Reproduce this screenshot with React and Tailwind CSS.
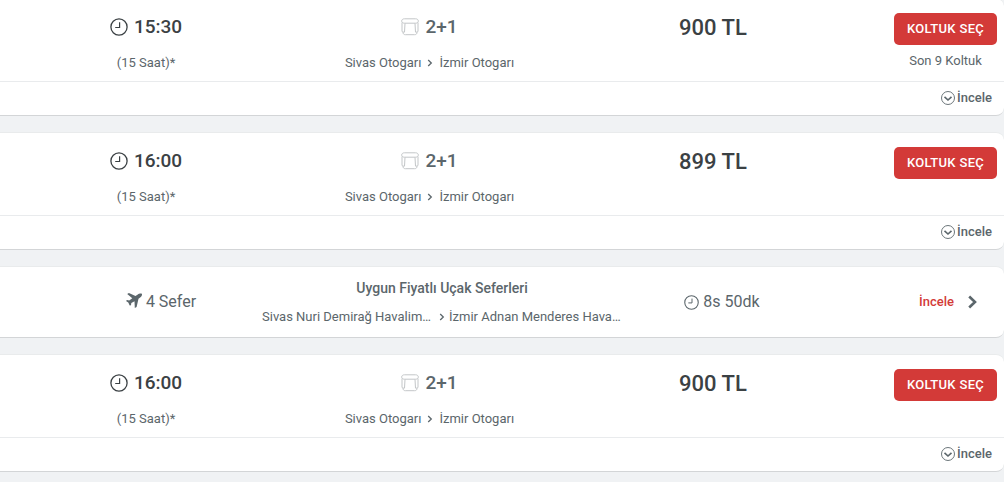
function Clock({ className }) {
  return (
    <svg viewBox="0 0 18 18" fill="none" stroke="currentColor" className={className} aria-hidden="true">
      <circle cx="9" cy="9" r="8.1" strokeWidth="1.3" />
      <path d="M9.6 4.3V9.5H5.2" strokeWidth="1.2" />
    </svg>
  );
}

function Seat() {
  return (
    <svg viewBox="0 0 18 18" fill="none" stroke="currentColor" className="size-[18px] text-[#c3c6c8]" aria-hidden="true">
      <path d="M3.5 0.800H14.500C16.300 0.800 17.300 1.700 17.300 3C17.300 4.300 16.300 5.200 14.500 5.200H3.500C1.700 5.200 0.700 4.300 0.700 3C0.700 1.700 1.700 0.800 3.500 0.800Z" />
      <path d="M1 4.500V13C1 13.700 1.400 14.100 2.100 14.100H3.500L4 5.400M17 4.500V13C17 13.700 16.600 14.100 15.900 14.100H14.500L14 5.400" />
      <path d="M2 14.200C2 15.900 2.900 16.700 4.400 16.700H13.600C15.100 16.700 16 15.900 16 14.200" />
    </svg>
  );
}

function SmallArrow() {
  return (
    <svg viewBox="0 0 6 8" fill="none" stroke="currentColor" strokeWidth="1.3" className="h-2 w-1.5 shrink-0" aria-hidden="true">
      <path d="M1.2 1L4.3 4L1.2 7" />
    </svg>
  );
}

function CircleDown() {
  return (
    <svg viewBox="0 0 14 14" fill="none" stroke="currentColor" className="size-3.5" aria-hidden="true">
      <circle cx="7" cy="7" r="6.5" strokeWidth="0.9" />
      <path d="M3.5 5.8L7 9L10.5 5.8" strokeWidth="1.6" />
    </svg>
  );
}

function Plane() {
  return (
    <svg viewBox="0 0 16 18" fill="currentColor" className="h-[18px] w-4" aria-hidden="true">
      <path d="M15.800 0.800C15 0 12.800 0.700 11.800 1.400L9.500 3L2.900 0.100L1.200 0.900L6.300 5.200L3.200 7.600L1 7L0 7.900L2.300 9.600L3.700 12.600L5 12.200L5.300 10.100L8.500 8.200L8.800 15L10.600 14L12.500 5.800L14.800 4C15.900 3.100 16.300 1.500 15.800 0.800Z" />
    </svg>
  );
}

function Card({ children }) {
  return (
    <article className="rounded-r-lg border-y border-[#e9ebec] border-b-[#d3d5d7] bg-white">
      {children}
    </article>
  );
}

function BusTrip({ time, price, left }) {
  return (
    <Card>
      <div className="grid h-[83px] grid-cols-[292fr_275fr_320fr_117fr] border-b border-[#e9ebed] pt-3.5 text-center">
        <div>
          <div className="flex h-7 items-center justify-center gap-1.5 text-[19px] font-medium text-[#3b4144]">
            <Clock className="size-[18px]" />
            <span>{time}</span>
          </div>
          <p className="mt-3 text-[13px] leading-5">(15 Saat)*</p>
        </div>
        <div>
          <div className="flex h-7 items-center justify-center gap-1.5 text-[19px] font-medium">
            <Seat />
            <span>2+1</span>
          </div>
          <p className="mt-3 flex items-center justify-center gap-1.5 text-[13px] leading-5">
            <span>Sivas Otogarı</span>
            <SmallArrow />
            <span>İzmir Otogarı</span>
          </p>
        </div>
        <div className="pr-7 text-[22px] leading-[30px] font-medium text-[#3b4144]">{price} TL</div>
        <div>
          <button type="button" className="h-8 w-[103px] rounded-[5px] bg-[#d33a38] text-[13px] font-medium tracking-wide text-white">
            KOLTUK SEÇ
          </button>
          {left && <p className="mt-1.5 text-[13px] leading-5">{left}</p>}
        </div>
      </div>
      <div className="flex h-[33px] items-center justify-end pr-3 pb-0.5">
        <button type="button" className="flex items-center gap-0.5 text-[13px] font-medium">
          <CircleDown />
          İncele
        </button>
      </div>
    </Card>
  );
}

function FlightOffer() {
  return (
    <Card>
      <div className="grid h-[70px] grid-cols-[262fr_360fr_200fr_182fr]">
        <div className="flex items-center justify-center gap-1 pl-15 text-base">
          <Plane />
          4 Sefer
        </div>
        <div className="flex min-w-0 flex-col items-center pt-[9px]">
          <h2 className="text-sm leading-6 font-medium">Uygun Fiyatlı Uçak Seferleri</h2>
          <p className="mt-[5px] flex w-full items-center gap-1 text-[13px] leading-6">
            <span className="min-w-0 flex-1 truncate">Sivas Nuri Demirağ Havalimanı</span>
            <SmallArrow />
            <span className="min-w-0 flex-1 truncate">İzmir Adnan Menderes Havalimanı</span>
          </p>
        </div>
        <div className="flex items-center justify-center gap-1 text-base">
          <Clock className="size-[15px]" />
          8s 50dk
        </div>
        <a href="#ucak" className="flex items-center justify-end gap-3.5 pr-[27px] text-[13px] font-medium text-[#d33a38]">
          İncele
          <svg viewBox="0 0 9 14" fill="none" stroke="currentColor" strokeWidth="2.6" className="h-3.5 w-[9px] text-[#5b666b]" aria-hidden="true">
            <path d="M1.200 1.500L7 7L1.200 12.500" />
          </svg>
        </a>
      </div>
    </Card>
  );
}

export default function App() {
  return (
    <div className="min-h-screen overflow-hidden bg-[#f0f2f4] font-['Roboto',sans-serif] text-[#5b666b]">
      <main className="-mt-0.5 flex flex-col gap-4 pb-2.5">
        <BusTrip time="15:30" price="900" left="Son 9 Koltuk" />
        <BusTrip time="16:00" price="899" />
        <FlightOffer />
        <BusTrip time="16:00" price="900" />
      </main>
    </div>
  );
}
